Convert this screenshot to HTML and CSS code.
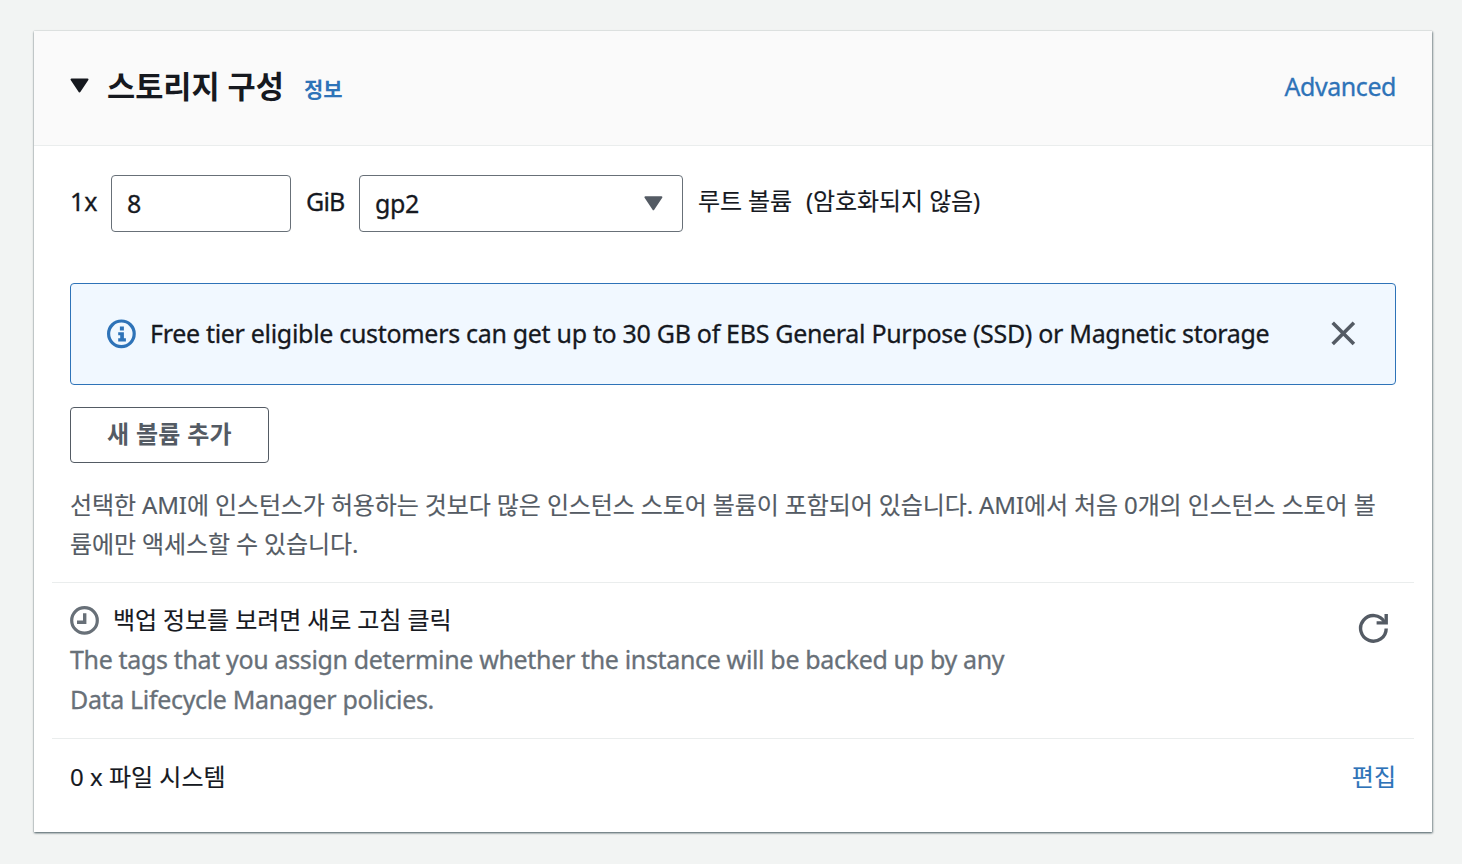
FILE: index.html
```html
<!DOCTYPE html>
<html lang="ko">
<head>
<meta charset="utf-8">
<title>스토리지 구성</title>
<link rel="stylesheet" href="styles.css">
</head>
<body>
<main class="panel">
  <header class="panel-header">
    <svg class="caret" width="20" height="16" viewBox="0 0 20 16"><path d="M1.5 1.5h16l-8 12z" fill="currentColor" stroke="currentColor" stroke-width="2" stroke-linejoin="round"/></svg>
    <h2 class="title">스토리지 구성</h2>
    <a class="info-link">정보</a>
    <a class="advanced-link">Advanced</a>
  </header>
  <div class="panel-body">
    <div class="volume-row">
      <span class="count">1x</span>
      <div class="input"><span>8</span></div>
      <span class="unit">GiB</span>
      <div class="select"><span>gp2</span>
        <svg width="20" height="16" viewBox="0 0 20 16"><path d="M2.4 2.3h16l-8 12z" fill="currentColor" stroke="currentColor" stroke-width="2" stroke-linejoin="round"/></svg>
      </div>
      <span class="root-label">루트 볼륨</span>
      <span class="encryption">(암호화되지 않음)</span>
    </div>
    <div class="alert">
      <svg class="alert-icon" width="30" height="30" viewBox="0 0 30 30"><circle cx="15.4" cy="14.8" r="12.8" fill="none" stroke="currentColor" stroke-width="3.2"/><path d="M13.9 7.6h4v4h-4zM12.2 13.3h5.7v6h2v3.2h-7.7v-3.2h2v-3h-2z" fill="currentColor"/></svg>
      <span class="alert-text">Free tier eligible customers can get up to 30 GB of EBS General Purpose (SSD) or Magnetic storage</span>
      <svg class="close" width="26" height="26" viewBox="0 0 26 26"><path d="M2.7 1.8l21.2 21.2M23.9 1.8L2.7 23" fill="none" stroke="currentColor" stroke-width="3.6"/></svg>
    </div>
    <button class="add-button">새 볼륨 추가</button>
    <p class="note"><span class="note-line">선택한 AMI에 인스턴스가 허용하는 것보다 많은 인스턴스 스토어 볼륨이 포함되어 있습니다. AMI에서 처음 0개의 인스턴스 스토어 볼</span><span class="note-line">륨에만 액세스할 수 있습니다.</span></p>
    <section class="backup">
      <div class="backup-copy">
        <div class="backup-title">
          <svg width="30" height="30" viewBox="0 0 30 30"><circle cx="14.5" cy="14.4" r="12.8" fill="none" stroke="currentColor" stroke-width="3.2"/><path d="M14.7 7.3v8.9H7" fill="none" stroke="currentColor" stroke-width="3.4"/></svg>
          <span>백업 정보를 보려면 새로 고침 클릭</span>
        </div>
        <p class="backup-text"><span class="backup-line">The tags that you assign determine whether the instance will be backed up by any</span><span class="backup-line">Data Lifecycle Manager policies.</span></p>
      </div>
      <svg class="refresh" width="32" height="32" viewBox="0 0 32 32"><path d="M29.2 16.4A12.8 12.8 0 1 1 27.5 10" fill="none" stroke="currentColor" stroke-width="3.4"/><path d="M29.2 2v8.9h-9.6" fill="none" stroke="currentColor" stroke-width="3.4"/></svg>
    </section>
    <section class="files">
      <span class="files-label">0 x 파일 시스템</span>
      <a class="edit-link">편집</a>
    </section>
  </div>
</main>
</body>
</html>
```
FILE: styles.css
```css
* { box-sizing: border-box; }
body {
  margin: 0;
  padding: 31px 30px 32px 34px;
  height: 864px;
  background: #f2f4f3;
  color: #16191f;
  font-family: "Noto Sans", "Noto Sans CJK KR", sans-serif;
  font-size: 25px;
  line-height: 40px;
  white-space: nowrap;
  overflow: hidden;
  -webkit-text-stroke: .3px currentColor;
}
h2, p { margin: 0; }
svg { flex: none; display: block; }
.panel {
  width: 1398px;
  height: 801px;
  background: #fff;
  box-shadow: 0 1px 2px rgba(0, 28, 36, .5), 1px 1px 2px rgba(0, 28, 36, .3), 0 0 1px rgba(0, 28, 36, .2);
}
.panel-header {
  display: flex;
  height: 115px;
  padding: 0 36px;
  background: #fafafa;
  border-bottom: 1px solid #eaeded;
}
.caret { margin: 47px 17px 0 0; }
.title {
  width: 197px;
  padding-top: 33px;
  font-size: 30.6px;
  line-height: 44px;
  font-weight: 700;
  -webkit-text-stroke: 0;
}
.info-link, .advanced-link, .edit-link { color: #2e73b8; }
.info-link {
  padding-top: 38px;
  font-size: 21px;
  font-weight: 700;
  -webkit-text-stroke: 0;
}
.advanced-link { margin-left: auto; padding-top: 35px; letter-spacing: -.45px; }
.panel-body { padding: 29px 18px 0; }
.volume-row { display: flex; height: 57px; padding-left: 18px; }
.volume-row > span { padding-top: 6px; }
.volume-row .count { width: 41px; }
.input, .select {
  display: flex;
  align-items: center;
  width: 180px;
  height: 57px;
  padding: 0 15px 1px;
  border: 1px solid #687078;
  border-radius: 4px;
}
.volume-row .unit { width: 68px; padding-left: 15px; letter-spacing: -.8px; }
.select { width: 324px; justify-content: space-between; padding-right: 19px; letter-spacing: -.4px; }
.select svg { color: #545b64; }
.volume-row .root-label { width: 123px; padding-left: 15px; font-size: 24px; letter-spacing: -.1px; }
.encryption, .root-label { -webkit-text-stroke: .15px currentColor; }
.encryption { font-size: 24px; letter-spacing: -.1px; }
.alert {
  display: flex;
  align-items: center;
  height: 102px;
  margin: 51px 18px 0;
  padding: 0 39px 0 35px;
  background: #f1f8ff;
  border: 1px solid #2e73b8;
  border-radius: 4px;
}
.alert-icon { color: #2e73b8; margin-right: 14px; }
.alert-text { padding-bottom: 2px; letter-spacing: -.31px; }
.close { color: #545b64; margin-left: auto; }
.add-button {
  display: flex;
  justify-content: center;
  width: 199px;
  height: 56px;
  margin: 22px 0 0 18px;
  padding: 6px 0 0;
  background: #fff;
  border: 1px solid #545b64;
  border-radius: 4px;
  color: #545b64;
  font: 700 24px/40px "Noto Sans", "Noto Sans CJK KR", sans-serif;
  letter-spacing: .3px;
  -webkit-text-stroke: 0;
}
.note {
  height: 119px;
  padding: 22px 18px 0;
  font-size: 24px;
  line-height: 39px;
  color: #545b64;
  letter-spacing: -.12px;
  -webkit-text-stroke: .15px currentColor;
}
.note-line, .backup-line { display: block; }
.backup {
  display: flex;
  justify-content: space-between;
  height: 157px;
  padding: 17px 25px 0 18px;
  border-top: 1px solid #eaeded;
  border-bottom: 1px solid #eaeded;
}
.backup-title { display: flex; height: 39px; gap: 13px; font-size: 24px; letter-spacing: -.1px; -webkit-text-stroke: .15px currentColor; }
.backup-title svg { color: #687078; margin-top: 6px; }
.backup-text { color: #687078; letter-spacing: -.345px; }
.refresh { color: #545b64; margin-top: 12px; }
.files { display: flex; justify-content: space-between; padding: 18px 18px 0; font-size: 24px; -webkit-text-stroke: .15px currentColor; }
```
